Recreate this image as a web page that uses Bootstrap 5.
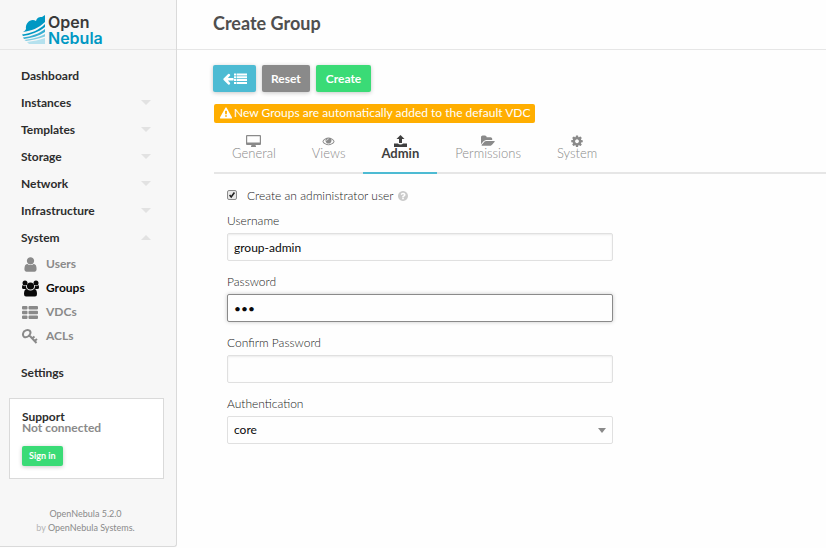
<!DOCTYPE html>
<html lang="en">
<head>
<meta charset="utf-8">
<meta name="viewport" content="width=device-width, initial-scale=1">
<title>Create Group</title>
<link href="https://cdn.jsdelivr.net/npm/bootstrap@5.3.0/dist/css/bootstrap.min.css" rel="stylesheet">
<style>
body { font-family: Lato, "Liberation Sans", sans-serif; font-size: 12px; line-height: 16px; color: #0a0a0a; background: #fefefe; }
svg { display: block; fill: currentColor; flex-shrink: 0; }
a { text-decoration: none; color: inherit; }
.side { width: 177px; background: #f7f7f7; border: 1px solid #dadada; border-width: 0 1px 1px 0; border-bottom-right-radius: 3px; }
.topbar { height: 50px; border-bottom: 1px solid #e6e6e6; }
.brand { padding: 14px 0 0 22px; gap: 2px; }
.brand-name { font-family: Inter, "Liberation Sans", sans-serif; font-weight: 600; font-size: 16px; line-height: 16px; color: #3a3a3a; }
.brand-name span { color: #0098c3; }
.menu { padding: 12px 25px 0 21px; font-weight: 700; color: #2d2d2d; }
.menu-item { height: 27px; }
.arrow { border: 5px solid transparent; border-top-color: #e2e2e2; border-bottom-width: 0; }
.arrow.up { border-top-width: 0; border-bottom: 5px solid #e2e2e2; }
.submenu { color: #8a8a8a; padding-top: 1px; }
.submenu a { height: 24px; gap: 6px; }
.submenu .current { color: #0a0a0a; }
.submenu svg { width: 19px; height: 17px; }
.settings { margin-top: 11px; }
.support { margin: 12px 12px 0 9px; padding: 12px; background: #fff; border: 1px solid #dadada; line-height: 11px; font-weight: 700; color: #2d2d2d; }
.support .state { color: #8a8a8a; }
.btn-one { --bs-btn-color: #fff; --bs-btn-hover-color: #fff; --bs-btn-font-size: 12px; --bs-btn-font-weight: 700; --bs-btn-border-width: 0; --bs-btn-border-radius: 2px; --bs-btn-padding-x: 9px; --bs-btn-padding-y: 0; height: 27px; line-height: 16px; box-shadow: 0 1px 4px rgba(0,0,0,.22); }
.btn-back { --bs-btn-bg: #4dbbd3; --bs-btn-hover-bg: #3ea9c1; }
.btn-reset { --bs-btn-bg: #8a8a8a; --bs-btn-hover-bg: #777; }
.btn-create { --bs-btn-bg: #3adb76; --bs-btn-hover-bg: #2cc665; --bs-btn-padding-x: 10px; }
.btn-signin { --bs-btn-font-size: 9px; --bs-btn-padding-x: 7px; height: 20px; margin-top: 13px; line-height: 12px; }
.version { padding: 28px 14px 11px 9px; font-size: 9px; line-height: 14px; color: #8a8a8a; }
.version span { color: #b5b5b5; }
.page-title { padding-left: 36px; font-size: 18px; font-weight: 700; line-height: 22px; color: #4f4f4f; padding-bottom: 4px; }
.actions { padding: 15px 0 0 36px; gap: 6px; }
.content-area { padding-left: 37px; }
.notice { margin-top: 12px; height: 19px; padding: 0 5px 2px 6px; gap: 2px; border-radius: 2px; background: #ffae00; color: #fefefe; }
.tabs { margin-top: 12px; border-bottom: 2px solid #e6e6e6; }
.tabs .nav-link { height: 39px; margin-bottom: -2px; padding: 0 18px; border-bottom: 2px solid transparent; border-radius: 0; color: #8a8a8a; font-size: 13px; font-weight: 300; line-height: 13px; }
.tabs .nav-link svg { height: 12px; }
.tabs .nav-link.active { color: #3f3f3f; font-weight: 700; border-color: #4dbbd3; }
.fields { padding: 14px 9px 0 13px; color: #222; }
.tick { height: 16px; gap: 10px; }
.tick .form-check-input { width: 10px; height: 10px; margin: 2px 0 0; border: 1px solid #8c8c8c; border-radius: 2px; background: #eee none; }
.tick .form-check-input:checked { background-color: #e8e8e8; background-image: url("data:image/svg+xml,%3Csvg xmlns='http://www.w3.org/2000/svg' viewBox='0 0 10 10'%3E%3Cpath d='M2 5l2 2.4L8 2' fill='none' stroke='%23222' stroke-width='2'/%3E%3C/svg%3E"); }
.light { font-weight: 300; }
.fields .form-label { margin: 9px 0 4px; font-weight: 300; display: block; }
.fields .form-control, .fields .form-select { height: 28px; padding: 0 6px; border: 1px solid #e0e0e0; border-radius: 2px; font-size: 12px; line-height: 16px; color: #0a0a0a; background-color: #fefefe; box-shadow: inset 0 1px 2px rgba(10,10,10,.08); margin-bottom: 13px; }
.fields .form-control.active { border-color: #8a8a8a; box-shadow: 0 0 4px #cacaca; }
.fields .form-select { box-shadow: none; background-image: url("data:image/svg+xml,%3Csvg xmlns='http://www.w3.org/2000/svg' viewBox='0 0 8 5'%3E%3Cpath d='M0 0h8L4 5z' fill='%238a8a8a'/%3E%3C/svg%3E"); background-size: 8px 5px; background-position: right 6px center; }
</style>
</head>
<body>
<div class="d-flex align-items-start">
<aside class="side flex-shrink-0">
  <div class="topbar">
    <a href="#" class="brand d-flex">
      <svg width="24" height="30" viewBox="0 0 24 30"><path fill="#0098c3" d="M4 15C3 9 9 4 14 7C15 3 18 3 20 3L23 1V8C17 14 9 17 1 18C2 17 3 17 4 15Z"/><path fill="#0098c3" d="M0 20.500C9 19.500 17 16 23 10V13C17 18 8 21 1 22Z"/><path fill="#35add1" d="M1 23.500C9 22.500 18 19.500 23 15V18C17 22 9 24 2 25Z"/><path fill="#7fcce2" d="M2.500 26C10 25 18 23 23 20V22.500C17 25 10 26 4 27Z"/><path fill="#b5e1ee" d="M5 28C11 27 18 26 23 24V30H7Z"/></svg>
      <div class="brand-name">Open<br><span>Nebula</span></div>
    </a>
  </div>
  <nav class="menu">
    <a href="#" class="menu-item d-flex align-items-center justify-content-between">Dashboard</a>
    <a href="#" class="menu-item d-flex align-items-center justify-content-between">Instances<i class="arrow"></i></a>
    <a href="#" class="menu-item d-flex align-items-center justify-content-between">Templates<i class="arrow"></i></a>
    <a href="#" class="menu-item d-flex align-items-center justify-content-between">Storage<i class="arrow"></i></a>
    <a href="#" class="menu-item d-flex align-items-center justify-content-between">Network<i class="arrow"></i></a>
    <a href="#" class="menu-item d-flex align-items-center justify-content-between">Infrastructure<i class="arrow"></i></a>
    <a href="#" class="menu-item d-flex align-items-center justify-content-between">System<i class="arrow up"></i></a>
    <div class="submenu">
      <a href="#" class="d-flex align-items-center"><svg viewBox="100 0 1592 1792"><path d="M1536 1399q0 109-62.5 187t-150.5 78h-854q-88 0-150.500-78t-62.500-187q0-85 8.500-160.500t31.500-152 58.500-131 94-89 134.500-34.500q131 128 313 128t313-128q76 0 134.500 34.500t94 89 58.500 131 31.500 152 8.500 160.500zm-256-887q0 159-112.500 271.500t-271.500 112.500-271.500-112.500-112.500-271.500 112.500-271.500 271.500-112.500 271.500 112.500 112.500 271.500z"/></svg>Users</a>
      <a href="#" class="d-flex align-items-center current"><svg viewBox="0 0 19 17"><circle cx="4" cy="3" r="2.500"/><circle cx="15" cy="3" r="2.500"/><circle cx="9.500" cy="6" r="3.600"/><path d="M1.500 5Q4 7 5 5.500Q5 8 6 9H2.500Q1 9 1 7.500Q1 6 1.500 5ZM17.500 5Q15 7 14 5.500Q14 8 13 9H16.500Q18 9 18 7.500Q18 6 17.500 5ZM6 9Q9.500 12 13 9Q16 9 16 14Q16 16.500 14 16.500H5Q3 16.500 3 14Q3 9 6 9Z"/></svg>Groups</a>
      <a href="#" class="d-flex align-items-center"><svg viewBox="0 0 19 17"><path d="M2 2h3.500q1 0 1 1v1.500q0 1-1 1H2q-1 0-1-1V3q0-1 1-1zm6.500 0H16q1 0 1 1v1.500q0 1-1 1H8.500q-1 0-1-1V3q0-1 1-1zM2 6.700h3.500q1 0 1 1v1.500q0 1-1 1H2q-1 0-1-1V7.700q0-1 1-1zm6.500 0H16q1 0 1 1v1.500q0 1-1 1H8.500q-1 0-1-1V7.700q0-1 1-1zM2 11.400h3.500q1 0 1 1v1.500q0 1-1 1H2q-1 0-1-1v-1.500q0-1 1-1zm6.500 0H16q1 0 1 1v1.500q0 1-1 1H8.500q-1 0-1-1v-1.500q0-1 1-1z"/></svg>VDCs</a>
      <a href="#" class="d-flex align-items-center"><svg viewBox="0 0 19 17" fill="none" stroke="currentColor" stroke-width="2"><path fill="none" d="M3 3.500Q6 1 8.500 2.500Q10.500 4.500 8.500 7Q6 10 3.200 9Q.8 7 3 3.500ZM8.500 7.500L15.500 15M11 10.500L13.500 8.500M13.500 13L16 11"/></svg>ACLs</a>
    </div>
    <a href="#" class="menu-item settings d-flex align-items-center">Settings</a>
  </nav>
  <section class="support">
    <div>Support</div>
    <div class="state">Not connected</div>
    <button type="button" class="btn btn-one btn-create btn-signin">Sign in</button>
  </section>
  <footer class="version text-center"><a href="#">OpenNebula 5.2.0</a><br><span>by</span> <a href="#">OpenNebula Systems.</a></footer>
</aside>
<main class="flex-grow-1">
  <header class="topbar d-flex align-items-center"><h1 class="page-title m-0">Create Group</h1></header>
  <div class="actions d-flex">
    <button type="button" class="btn btn-one btn-back d-flex align-items-center" aria-label="Back to list"><svg width="12" height="12" viewBox="0 100 1714 1650"><path d="M1664 896v128q0 53-32.500 90.500t-84.500 37.500h-704l293 294q38 36 38 90t-38 90l-75 76q-37 37-90 37-52 0-91-37l-651-652q-37-37-37-90 0-52 37-91l651-650q38-38 91-38 52 0 90 38l75 74q38 38 38 91t-38 91l-293 293h704q52 0 84.500 37.500t32.500 90.500z"/></svg><svg width="13" height="12" viewBox="0 0 13 12"><path d="M0 .5h2v2H0zm2.600 0H13v2H2.600zM0 3.300h2v2H0zm2.600 0H13v2H2.600zM0 6.100h2v2H0zm2.600 0H13v2H2.600zM0 8.900h2v2H0zm2.600 0H13v2H2.600z"/></svg></button>
    <button type="reset" form="group-form" class="btn btn-one btn-reset">Reset</button>
    <button type="submit" form="group-form" class="btn btn-one btn-create">Create</button>
  </div>
  <div class="content-area">
    <div class="d-flex"><div class="notice d-flex align-items-center"><svg width="12" height="12" viewBox="0 0 1792 1664"><path d="M1024 1375v-190q0-14-9.500-23.500t-22.500-9.500h-192q-13 0-22.500 9.500t-9.500 23.500v190q0 14 9.500 23.500t22.500 9.500h192q13 0 22.500-9.500t9.500-23.500zm-2-374l18-459q0-12-10-19-13-11-24-11h-220q-11 0-24 11-10 7-10 21l17 457q0 10 10 16.500t24 6.500h185q14 0 23.500-6.500t10.500-16.500zm-14-934l768 1408q35 63-2 126-17 29-46.500 46t-63.500 17h-1536q-34 0-63.500-17t-46.500-46q-37-63-2-126l768-1408q17-31 47-49t65-18 65 18 47 49z"/></svg>New Groups are automatically added to the default VDC</div></div>
    <nav class="tabs nav flex-nowrap">
      <a href="#" class="nav-link d-flex flex-column align-items-center"><svg width="15" height="12" viewBox="0 0 15 12"><path fill-rule="evenodd" d="M1 0H14Q15 0 15 1V9Q15 10 14 10H9.500L10 11.500V12H5V11.500L5.500 10H1Q0 10 0 9V1Q0 0 1 0ZM1.200 1.200V7.600H13.800V1.200Z"/></svg>General</a>
      <a href="#" class="nav-link d-flex flex-column align-items-center"><svg width="13" height="12" viewBox="0 0 1792 1792"><path d="M1664 960q-152-236-381-353 61 104 61 225 0 185-131.500 316.500t-316.500 131.500-316.500-131.500-131.500-316.500q0-121 61-225-229 117-381 353 133 205 333.500 326.500t434.500 121.500 434.500-121.500 333.500-326.500zm-720-384q0-20-14-34t-34-14q-125 0-214.500 89.500t-89.500 214.500q0 20 14 34t34 14 34-14 14-34q0-86 61-147t147-61q20 0 34-14t14-34zm848 384q0 34-20 69-140 230-376.500 368.500t-499.500 138.500-499.500-139-376.500-368q-20-35-20-69t20-69q140-229 376.500-368t499.500-139 499.500 139 376.500 368q20 35 20 69z"/></svg>Views</a>
      <a href="#" class="nav-link active d-flex flex-column align-items-center"><svg width="13" height="12" viewBox="0 0 13 12"><path d="M6.500 0L10.500 4H8V8H5V4H2.500ZM0 8.500H4Q4.500 9.500 6.500 9.500T9 8.500H13V12H0Z"/></svg>Admin</a>
      <a href="#" class="nav-link d-flex flex-column align-items-center"><svg width="14" height="12" viewBox="0 128 1920 1536"><path d="M1879 952q0 31-31 66l-336 396q-43 51-120.500 86.500t-143.500 35.500h-1088q-34 0-60.500-13t-26.500-43q0-31 31-66l336-396q43-51 120.500-86.500t143.500-35.500h1088q34 0 60.500 13t26.500 43zm-343-344v160h-832q-94 0-197 47.500t-164 119.500l-337 396-5 6q0-4-.5-12.500t-.5-12.500v-960q0-92 66-158t158-66h320q92 0 158 66t66 158v32h544q92 0 158 66t66 158z"/></svg>Permissions</a>
      <a href="#" class="nav-link d-flex flex-column align-items-center"><svg width="12" height="12" viewBox="96 64 1600 1600"><path d="M1152 896q0-106-75-181t-181-75-181 75-75 181 75 181 181 75 181-75 75-181zm512-109v222q0 12-8 23t-20 13l-185 28q-19 54-39 91 35 50 107 138 10 12 10 25t-9 23q-27 37-99 108t-94 71q-12 0-26-9l-138-108q-44 23-91 38-16 136-29 186-7 28-36 28h-222q-14 0-24.500-8.500t-11.500-21.500l-28-184q-49-16-90-37l-141 107q-10 9-25 9-14 0-25-11-126-114-165-168-7-10-7-23 0-12 8-23 15-21 51-66.500t54-70.500q-27-50-41-99l-183-27q-13-2-21-12.500t-8-23.500v-222q0-12 8-23t19-13l186-28q14-46 39-92-40-57-107-138-10-12-10-24 0-10 9-23 26-36 98.500-107.500t94.500-71.500q13 0 26 10l138 107q44-23 91-38 16-136 29-186 7-28 36-28h222q14 0 24.500 8.500t11.500 21.500l28 184q49 16 90 37l142-107q9-9 24-9 13 0 25 10 129 119 165 170 7 8 7 22 0 12-8 23-15 21-51 66.500t-54 70.500q26 50 41 98l183 28q13 2 21 12.500t8 23.500z"/></svg>System</a>
    </nav>
    <form id="group-form" class="row g-0">
      <div class="col-8 fields">
        <div class="tick d-flex align-items-start light">
          <input class="form-check-input" type="checkbox" id="make-admin" checked>
          <label for="make-admin" class="d-flex align-items-center gap-1">Create an administrator user <svg width="10" height="10" viewBox="128 128 1536 1536"><path fill="#cacaca" d="M1024 1376v-192q0-14-9-23t-23-9h-192q-14 0-23 9t-9 23v192q0 14 9 23t23 9h192q14 0 23-9t9-23zm256-672q0-88-55.500-163t-138.500-116-170-41q-243 0-371 213-15 24 8 42l132 100q7 6 19 6 16 0 25-12 53-68 86-92 34-24 86-24 48 0 85.500 26t37.500 59q0 38-20 61t-68 45q-63 28-115.500 86.500t-52.500 125.500v36q0 14 9 23t23 9h192q14 0 23-9t9-23q0-19 21.500-49.500t54.500-49.500q32-18 49-28.500t46-35 44.500-48 28-60.500 12.500-81zm384 192q0 209-103 385.500t-279.500 279.500-385.500 103-385.500-103-279.500-279.500-103-385.500 103-385.500 279.500-279.500 385.500-103 385.500 103 279.500 279.500 103 385.500z"/></svg></label>
        </div>
        <label class="form-label" for="username">Username</label>
        <input class="form-control" type="text" id="username" value="group-admin">
        <label class="form-label" for="password">Password</label>
        <input class="form-control active" type="password" id="password" value="abc">
        <label class="form-label" for="confirm">Confirm Password</label>
        <input class="form-control" type="password" id="confirm">
        <label class="form-label" for="auth">Authentication</label>
        <select class="form-select" id="auth"><option>core</option></select>
      </div>
    </form>
  </div>
</main>
</div>
<script src="https://cdn.jsdelivr.net/npm/bootstrap@5.3.0/dist/js/bootstrap.bundle.min.js"></script>
</body>
</html>
